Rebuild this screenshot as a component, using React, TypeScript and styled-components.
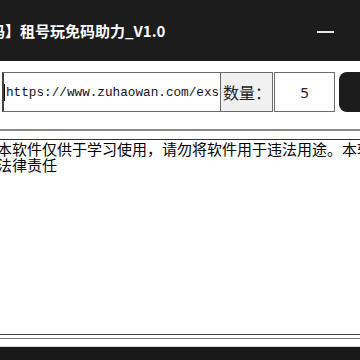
import React from "react";
import styled, { createGlobalStyle } from "styled-components";

const Global = createGlobalStyle`
  html, body { margin: 0; padding: 0; background: #ffffff; overflow: hidden; }
  body { width: 360px; height: 360px; }
`;

const Window = styled.div`
  width: 360px;
  height: 360px;
  display: flex;
  flex-direction: column;
  background: #ffffff;
  overflow: hidden;
`;

const TitleBar = styled.div`
  height: 61px;
  flex: none;
  background: #1c1c1c;
  display: flex;
  align-items: center;
  overflow: hidden;
`;

const Title = styled.div`
  font-family: "Noto Sans CJK SC", "Noto Sans", sans-serif;
  font-weight: 700;
  font-size: 15px;
  color: #ffffff;
  white-space: nowrap;
  margin-left: -55px;
  margin-top: -1px;
  flex: 1;
`;

const Controls = styled.div`
  display: flex;
  align-items: center;
  gap: 32px;
  margin-right: -23px;
  flex: none;
`;

const MinIcon = styled.div`
  width: 17px;
  height: 2px;
  background: #e8e8e8;
  margin-top: 2px;
`;

const MaxIcon = styled.div`
  width: 15px;
  height: 15px;
  border: 1.5px solid #e8e8e8;
`;

const Body = styled.div`
  flex: 1;
  display: flex;
  flex-direction: column;
  padding-top: 11px;
`;

const Row = styled.div`
  display: flex;
  height: 40px;
  margin-left: 2px;
  overflow: hidden;
  flex: none;
`;

const UrlBox = styled.div`
  width: 219px;
  flex: none;
  box-sizing: border-box;
  border: 1px solid #6a6a6a;
  border-left: 2px solid #444;
  display: flex;
  align-items: center;
  overflow: hidden;
  white-space: nowrap;
  font-family: "Liberation Mono", monospace;
  font-size: 12.7px;
  color: #111;
`;

const Caret = styled.span`
  display: inline-block;
  flex: none;
  width: 1px;
  height: 17px;
  background: #000;
  margin-right: 1px;
`;

const Label = styled.div`
  width: 52px;
  flex: none;
  box-sizing: border-box;
  border: 1px solid #6a6a6a;
  border-left: none;
  background: #f0f0f0;
  display: flex;
  align-items: center;
  padding-left: 2px;
  font-family: "Noto Sans CJK SC", sans-serif;
  font-size: 16px;
  color: #222;
  white-space: nowrap;
  overflow: hidden;
`;

const NumBox = styled.div`
  width: 61px;
  flex: none;
  margin-left: 1px;
  box-sizing: border-box;
  border: 1px solid #6a6a6a;
  display: flex;
  align-items: center;
  justify-content: center;
  font-family: "Noto Sans", sans-serif;
  font-size: 15px;
  color: #222;
`;

const RunButton = styled.div`
  width: 40px;
  flex: none;
  margin-left: 4px;
  background: #1c1c1c;
  border-radius: 8px;
`;

const Section = styled.div`
  margin-top: 17px;
  border-top: 2px solid #8c8c8c;
  border-bottom: 1px solid #777;
  padding-top: 8px;
  padding-bottom: 3px;
  flex: none;
`;

const TextArea = styled.div`
  height: 193px;
  border-top: 1px solid #333;
  border-bottom: 1px solid #444;
  padding-top: 1px;
  overflow: hidden;
  font-family: "Noto Sans CJK SC", sans-serif;
  font-size: 15px;
  line-height: 16px;
  color: #000;
`;

const Line = styled.div`
  white-space: nowrap;
  margin-left: -3px;
`;

const Spacer = styled.div`
  height: 7px;
  flex: none;
  border-bottom: 1px solid #d8d8d8;
`;

const Taskbar = styled.div`
  flex: 1;
  background: #181818;
`;

export default function App() {
  return (
    <Window>
      <Global />
      <TitleBar>
        <Title>【助力码】租号玩免码助力_V1.0</Title>
        <Controls>
          <MinIcon />
          <MaxIcon />
        </Controls>
      </TitleBar>
      <Body>
        <Row>
          <UrlBox>
            <Caret />
            https://www.zuhaowan.com/exs
          </UrlBox>
          <Label>数量：</Label>
          <NumBox>5</NumBox>
          <RunButton />
        </Row>
        <Section>
          <TextArea>
            <Line>本软件仅供于学习使用，请勿将软件用于违法用途。本软件作者不承担任何</Line>
            <Line>法律责任</Line>
          </TextArea>
        </Section>
        <Spacer />
        <Taskbar />
      </Body>
    </Window>
  );
}
